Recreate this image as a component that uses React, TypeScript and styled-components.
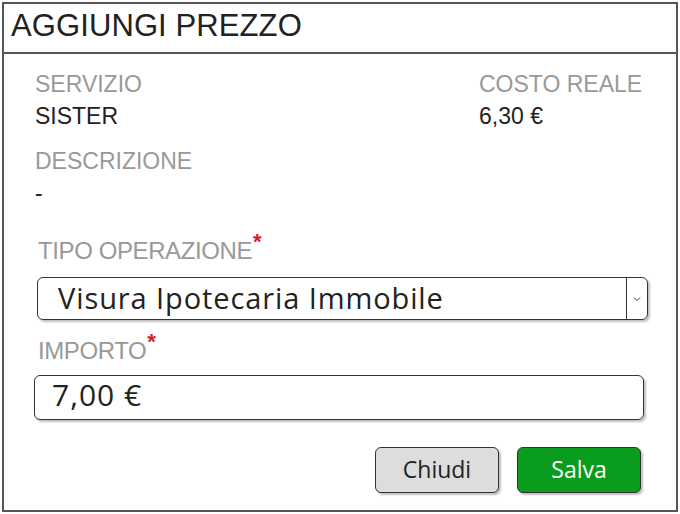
import React from 'react';
import styled, { createGlobalStyle } from 'styled-components';

const GlobalStyle = createGlobalStyle`
  html, body {
    margin: 0;
    padding: 0;
    background: #ffffff;
  }
  body {
    font-family: 'Liberation Sans', Arial, sans-serif;
  }
`;

const Frame = styled.section`
  box-sizing: border-box;
  margin: 2px 0 0 2px;
  width: 676px;
  height: 510px;
  border: 2px solid #555;
  background: #fff;
  display: flex;
  flex-direction: column;
`;

const TitleBar = styled.header`
  box-sizing: border-box;
  height: 50px;
  border-bottom: 2px solid #555;
  padding: 4px 0 0 7px;
  font-size: 31px;
  line-height: 36px;
  color: #222;
  letter-spacing: 0.1px;
`;

const Body = styled.div`
  display: flex;
  flex-direction: column;
  padding: 18px 34px 0 31px;
`;

const InfoGrid = styled.div`
  display: grid;
  grid-template-columns: 444px 1fr;
  row-gap: 20px;
`;

const Field = styled.div`
  display: flex;
  flex-direction: column;
  gap: 7px;
  white-space: nowrap;
`;

const Label = styled.div`
  font-size: 23px;
  line-height: 25px;
  color: #999;
`;

const Value = styled.div`
  font-size: 23px;
  line-height: 25px;
  color: #222;
`;

const FormLabel = styled.div<{ $top: number }>`
  margin: ${(p) => p.$top}px 0 0 3px;
  font-size: 24px;
  line-height: 28px;
  color: #999;
  letter-spacing: -0.4px;
`;

const Required = styled.sup`
  color: #cc2222;
  font-size: 22px;
  line-height: 0;
  vertical-align: 10px;
  margin-left: 1px;
  font-weight: bold;
`;

const SelectBox = styled.div`
  box-sizing: border-box;
  margin: 12px 0 0 2px;
  width: 611px;
  height: 43px;
  border: 1.5px solid #333;
  border-radius: 6px;
  box-shadow: 2px 2px 2px rgba(0, 0, 0, 0.25);
  display: flex;
  align-items: stretch;
`;

const SelectText = styled.div`
  flex: 1;
  display: flex;
  align-items: center;
  padding-left: 20px;
  padding-bottom: 3px;
  font-family: 'Open Sans', 'Liberation Sans', sans-serif;
  font-size: 29px;
  letter-spacing: 0.9px;
  color: #222;
`;

const Chevron = styled.div`
  width: 20px;
  border-left: 1.5px solid #333;
  display: flex;
  align-items: center;
  justify-content: center;
`;

const InputBox = styled.div`
  box-sizing: border-box;
  margin: 10px 0 0 -1px;
  width: 610px;
  height: 45px;
  border: 1.5px solid #333;
  border-radius: 6px;
  box-shadow: 2px 2px 2px rgba(0, 0, 0, 0.25);
  display: flex;
  align-items: center;
  padding-left: 17px;
  padding-bottom: 6px;
  font-family: 'Open Sans', 'Liberation Sans', sans-serif;
  font-size: 30px;
  letter-spacing: 1px;
  color: #222;
`;

const Actions = styled.div`
  display: flex;
  justify-content: flex-end;
  gap: 18px;
  margin-top: 27px;
  padding-right: 1px;
`;

const Button = styled.button<{ $primary?: boolean }>`
  box-sizing: border-box;
  width: 124px;
  height: 46px;
  border: 1.5px solid #333;
  border-radius: 6px;
  background: ${(p) => (p.$primary ? '#0a9c1c' : '#dddddd')};
  color: ${(p) => (p.$primary ? '#ffffff' : '#222')};
  font-family: 'Open Sans', 'Liberation Sans', sans-serif;
  font-size: 23px;
  padding: 0 0 3px;
  box-shadow: 2px 2px 2px rgba(0, 0, 0, 0.25);
  cursor: pointer;
`;

export default function App() {
  return (
    <>
      <GlobalStyle />
      <Frame>
        <TitleBar>AGGIUNGI PREZZO</TitleBar>
        <Body>
          <InfoGrid>
            <Field>
              <Label>SERVIZIO</Label>
              <Value>SISTER</Value>
            </Field>
            <Field>
              <Label>COSTO REALE</Label>
              <Value>6,30 €</Value>
            </Field>
            <Field>
              <Label>DESCRIZIONE</Label>
              <Value>-</Value>
            </Field>
          </InfoGrid>
          <FormLabel $top={31}>
            TIPO OPERAZIONE<Required>*</Required>
          </FormLabel>
          <SelectBox>
            <SelectText>Visura Ipotecaria Immobile</SelectText>
            <Chevron>
              <svg width="8" height="6" viewBox="0 0 8 6">
                <path d="M1 1.5 L4 4.5 L7 1.5" fill="none" stroke="#333" strokeWidth="1" />
              </svg>
            </Chevron>
          </SelectBox>
          <FormLabel $top={17}>
            IMPORTO<Required>*</Required>
          </FormLabel>
          <InputBox>7,00 €</InputBox>
          <Actions>
            <Button>Chiudi</Button>
            <Button $primary>Salva</Button>
          </Actions>
        </Body>
      </Frame>
    </>
  );
}
